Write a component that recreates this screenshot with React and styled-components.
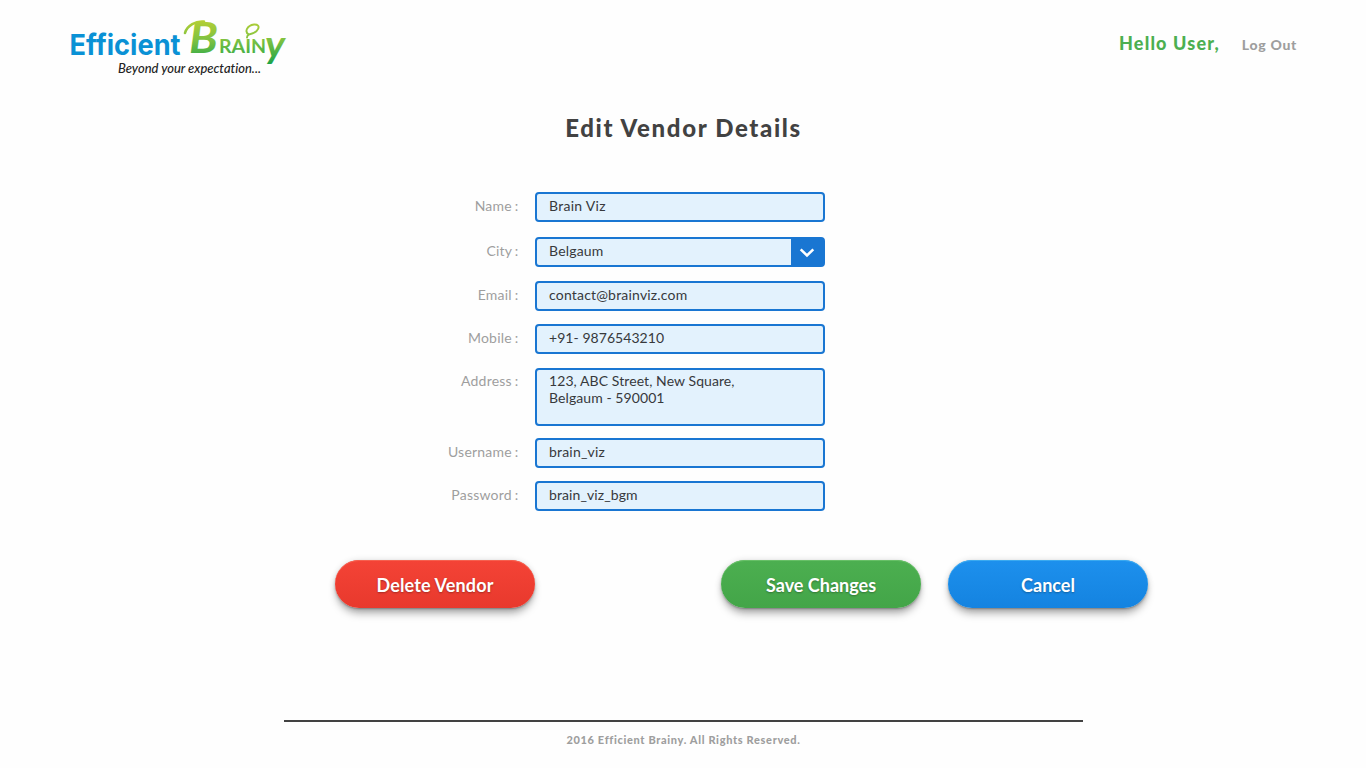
import React from "react";
import styled, { createGlobalStyle } from "styled-components";

const GlobalStyle = createGlobalStyle`
  * { box-sizing: border-box; }
  body { margin: 0; background: #fefefe; font-family: Lato, sans-serif; }
`;

const Page = styled.div`
  width: 1366px;
  height: 768px;
  display: flex;
  flex-direction: column;
  overflow: hidden;
`;

const Header = styled.header`
  height: 98px;
  padding: 10px 69px 0 66px;
  display: flex;
  justify-content: space-between;
  align-items: flex-start;
`;

const LogoArt = styled.svg`
  display: block;
  width: 224px;
  height: 76px;
`;

const Account = styled.div`
  display: flex;
  align-items: baseline;
  gap: 22px;
  padding-top: 22px;
`;

const Greeting = styled.span`
  font-size: 18px;
  line-height: 22px;
  font-weight: 900;
  letter-spacing: 1.15px;
  color: #4caf50;
`;

const LogOut = styled.a`
  font-size: 14px;
  line-height: 18px;
  font-weight: 900;
  letter-spacing: 0.7px;
  color: #9e9e9e;
`;

const Title = styled.h1`
  margin: 15px 0 0;
  padding-left: 1px;
  font-size: 24px;
  line-height: 30px;
  font-weight: 900;
  letter-spacing: 1.63px;
  text-align: center;
  color: #424242;
`;

const Form = styled.div`
  margin-top: 49px;
  padding-left: 400px;
`;

const Row = styled.div`
  display: flex;
  gap: 16px;
  margin-bottom: ${(p) => p.$gap}px;
`;

const Label = styled.label`
  width: 119px;
  padding: ${(p) => (p.$tall ? 4 : 5)}px 0.6px 0 0;
  font-size: 14px;
  line-height: 18px;
  letter-spacing: 0.22px;
  word-spacing: -1px;
  text-align: right;
  color: #9e9e9e;
`;

const Field = styled.div`
  display: flex;
  justify-content: space-between;
  width: 290px;
  height: ${(p) => (p.$tall ? 58 : 30)}px;
  border: 2px solid #1976d2;
  border-radius: 4px;
  background: #e3f2fd;
`;

const Value = styled.span`
  padding: ${(p) => (p.$tall ? 2 : 3)}px 0 0 12px;
  font-size: 14px;
  line-height: 17px;
  letter-spacing: ${(p) => p.$tracking ?? 0.19}px;
  white-space: pre-line;
  color: #37393c;
`;

const SelectArrow = styled.span`
  width: 32px;
  display: flex;
  align-items: center;
  justify-content: center;
  background: #1976d2;
`;

const Actions = styled.div`
  display: flex;
  margin-top: 49px;
  padding-left: 335px;
`;

const tones = {
  red: ["#f44336", "#e8392d", "#f6604f"],
  green: ["#4caf50", "#43a548", "#67c067"],
  blue: ["#1d90ed", "#1483e0", "#3baaf0"],
};

const Button = styled.button`
  width: 200px;
  height: 48px;
  margin: 0 ${(p) => p.$after || 0}px 0 0;
  padding: 2px 0 0;
  border: 0;
  border-radius: 24px;
  font: 700 18px/22px Lato, sans-serif;
  letter-spacing: ${(p) => p.$tracking || 0}px;
  color: #fff;
  text-shadow: 0 1px 2px rgba(0, 0, 0, 0.3);
  background: linear-gradient(${(p) => tones[p.$tone][0]}, ${(p) => tones[p.$tone][1]});
  box-shadow:
    inset 0 1px 0 ${(p) => tones[p.$tone][2]},
    0 0 6px rgba(0, 0, 0, 0.12),
    0 7px 8px -2px rgba(0, 0, 0, 0.34),
    0 1px 2px rgba(0, 0, 0, 0.25);
`;

const Footer = styled.footer`
  width: 799px;
  margin: auto 0 0 284px;
  height: 48px;
  border-top: 2px solid #424242;
  padding-top: 11px;
  text-align: center;
  font-size: 11px;
  line-height: 14px;
  font-weight: 900;
  letter-spacing: 0.66px;
  color: #9e9e9e;
`;

const fields = [
  { label: "Name", value: "Brain Viz", gap: 15, tracking: 0.28 },
  { label: "City", value: "Belgaum", gap: 14, select: true },
  { label: "Email", value: "contact@brainviz.com", gap: 13 },
  { label: "Mobile", value: "+91- 9876543210", gap: 14, tracking: 0.05 },
  { label: "Address", value: "123, ABC Street, New Square,\nBelgaum - 590001", gap: 12, tall: true, tracking: 0.08 },
  { label: "Username", value: "brain_viz", gap: 13 },
  { label: "Password", value: "brain_viz_bgm", gap: 0, tracking: 0.1 },
];

function Logo() {
  return (
    <LogoArt viewBox="66 10 224 76" role="img" aria-label="Efficient Brainy">
      <defs>
        <linearGradient id="leaf" gradientUnits="userSpaceOnUse" x1="0" y1="20" x2="0" y2="66">
          <stop offset="0" stopColor="#b5cf35" />
          <stop offset="0.45" stopColor="#7cc142" />
          <stop offset="1" stopColor="#13a04a" />
        </linearGradient>
      </defs>
      <text x="69.500" y="54.500" fontFamily="Inter, sans-serif" fontWeight="700" fontSize="29" fill="#0a91d5" textLength="111" lengthAdjust="spacingAndGlyphs">Efficient</text>
      <g fill="url(#leaf)" fontFamily="Lato, sans-serif">
        <text x="189" y="53" fontSize="42" fontWeight="700" fontStyle="italic" textLength="29" lengthAdjust="spacingAndGlyphs">B</text>
        <text x="219" y="52.500" fontSize="19" fontWeight="700" textLength="47" lengthAdjust="spacingAndGlyphs">RAIN</text>
        <text x="265" y="57.500" fontSize="39" fontWeight="700" fontStyle="italic" textLength="20" lengthAdjust="spacingAndGlyphs">y</text>
      </g>
      <g fill="none" stroke="url(#leaf)" strokeLinecap="round">
        <path d="M185 33C187 25.500 196 20.700 204 21.600" strokeWidth="2.6" />
        <path d="M249 34.500C244 32 247 25.500 254 24.500C262 24 259 32.500 249 34.500Q247 35.500 247 37.500" strokeWidth="1.9" />
      </g>
      <text x="118" y="73" fontFamily="Lato, cursive" fontStyle="italic" fontWeight="500" fontSize="14" fill="#222" textLength="143" lengthAdjust="spacingAndGlyphs" style={{ fontVariantLigatures: "none" }}>Beyond your expectation...</text>
    </LogoArt>
  );
}

export default function App() {
  return (
    <Page>
      <GlobalStyle />
      <Header>
        <Logo />
        <Account>
          <Greeting>Hello User,</Greeting>
          <LogOut>Log Out</LogOut>
        </Account>
      </Header>
      <Title>Edit Vendor Details</Title>
      <Form>
        {fields.map((f) => (
          <Row key={f.label} $gap={f.gap}>
            <Label $tall={f.tall}>{f.label} :</Label>
            <Field $tall={f.tall}>
              <Value $tall={f.tall} $tracking={f.tracking}>{f.value}</Value>
              {f.select && (
                <SelectArrow>
                  <svg width="16" height="12" viewBox="0 0 16 12" fill="none">
                    <path d="M1.700 3.300L8 9.500L14.300 3.300" stroke="#fff" strokeWidth="2.5" />
                  </svg>
                </SelectArrow>
              )}
            </Field>
          </Row>
        ))}
      </Form>
      <Actions>
        <Button $tone="red" $after={186} $tracking={0.15}>Delete Vendor</Button>
        <Button $tone="green" $after={27}>Save Changes</Button>
        <Button $tone="blue">Cancel</Button>
      </Actions>
      <Footer>2016 Efficient Brainy. All Rights Reserved.</Footer>
    </Page>
  );
}
